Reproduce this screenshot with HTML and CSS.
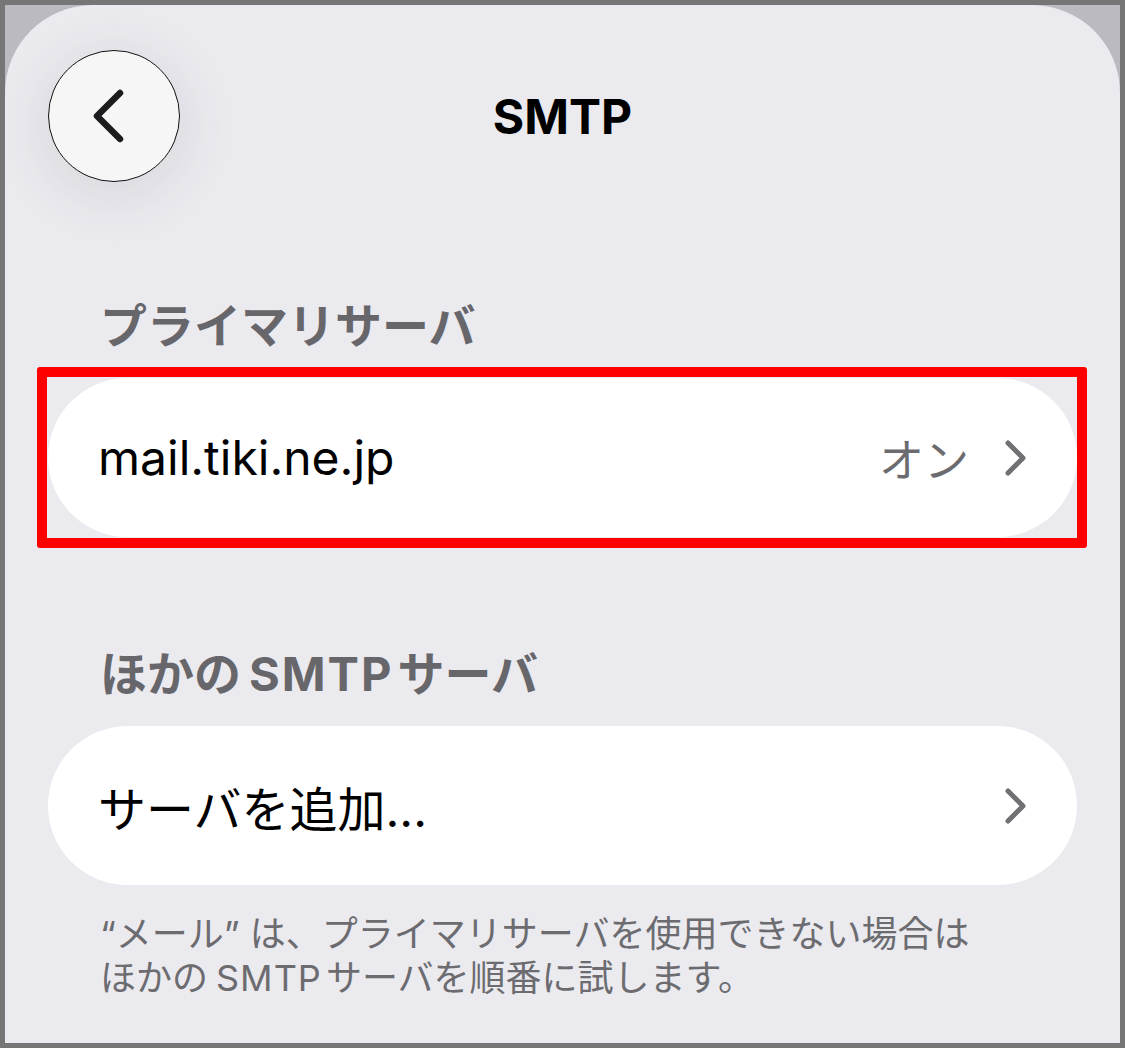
FILE: index.html
```html
<!DOCTYPE html>
<html lang="ja">
<head>
  <meta name="viewport" content="width=device-width, initial-scale=1.0">
  <meta charset="UTF-8">
  <title>SMTP</title>
  <link rel="stylesheet" href="styles.css">
</head>
<body>
  <div class="frame">
    <div class="panel">
      <div class="nav">
        <button class="back" aria-label="戻る">
          <svg width="40" height="60" viewBox="0 0 40 60">
            <path d="M30 7 L7 30 L30 53" fill="none" stroke="#1c1c1e" stroke-width="6.5" stroke-linecap="round" stroke-linejoin="round"/>
          </svg>
        </button>
        <h1 class="title">SMTP</h1>
      </div>

      <h2 class="section-title">プライマリサーバ</h2>
      <div class="row highlight">
        <span class="row-label">mail.tiki.ne.jp</span>
        <span class="row-value">オン</span>
        <svg class="chevron" width="22" height="36" viewBox="0 0 22 36">
          <path d="M3 3 L18 18 L3 33" fill="none" stroke="#707075" stroke-width="5" stroke-linecap="round" stroke-linejoin="round"/>
        </svg>
        <!-- red annotation frame -->
        <div class="mark"></div>
      </div>

      <h2 class="section-title second">ほかの<span class="latin">SMTP</span>サーバ</h2>
      <div class="row">
        <span class="row-label">サーバを追加...</span>
        <svg class="chevron" width="22" height="36" viewBox="0 0 22 36">
          <path d="M3 3 L18 18 L3 33" fill="none" stroke="#707075" stroke-width="5" stroke-linecap="round" stroke-linejoin="round"/>
        </svg>
      </div>

      <p class="note">“メール” は、プライマリサーバを使用できない場合は<br>ほかの<span class="latin">SMTP</span>サーバを順番に試します。</p>
    </div>
  </div>
</body>
</html>
```

FILE: styles.css
```css
html, body {
  height: 100%;
}

body {
  margin: 0;
  background: #767676;
  font-family: Inter, "Noto Sans CJK JP", sans-serif;
  box-sizing: border-box;
  padding: 5px;
}

.frame {
  height: 100%;
  background: #bbbac0;
  overflow: hidden;
}

.panel {
  height: 100%;
  background: #ebeaef;
  border-radius: 88px 88px 0 0;
  padding: 0 43px;
  box-sizing: border-box;
}

.nav {
  position: relative;
  display: flex;
  align-items: center;
  justify-content: center;
  padding-top: 45px;
  height: 132px;
}

.back {
  position: absolute;
  left: 0;
  top: 45px;
  width: 132px;
  height: 132px;
  border-radius: 50%;
  border: 1.5px solid #111;
  background: #f6f6f7;
  box-shadow: 0 10px 60px rgba(60, 60, 80, 0.13);
  display: flex;
  align-items: center;
  justify-content: center;
  padding: 0 8px 0 0;
}

.title {
  margin: 0;
  font-size: 48px;
  font-weight: 700;
  color: #000;
}

.section-title {
  margin: 116px 0 24px 52px;
  font-size: 47px;
  line-height: 56px;
  font-weight: 700;
  color: #67666b;
}

.section-title.second {
  margin-top: 109px;
  margin-bottom: 24px;
}

.latin {
  margin: 0 4px 0 8px;
  letter-spacing: 2px;
}

.row {
  position: relative;
  height: 159px;
  background: #fff;
  border-radius: 80px;
  display: flex;
  align-items: center;
  padding: 0 50px 0 50px;
}

.row-label {
  flex: 1;
  font-size: 48px;
  color: #000;
}

.row-value {
  font-size: 45px;
  color: #6c6c70;
  margin-right: 36px;
}

.chevron {
  display: block;
}

.mark {
  position: absolute;
  left: -11px;
  top: -11px;
  width: 1050px;
  height: 181px;
  border: 10px solid #ff0000;
  border-radius: 3px;
  box-sizing: border-box;
}

.note {
  margin: 27px 0 0 52px;
  font-size: 36px;
  line-height: 44px;
  color: #6c6c70;
}

.note .latin {
  margin: 0 4px 0 8px;
  letter-spacing: 1px;
}
```
